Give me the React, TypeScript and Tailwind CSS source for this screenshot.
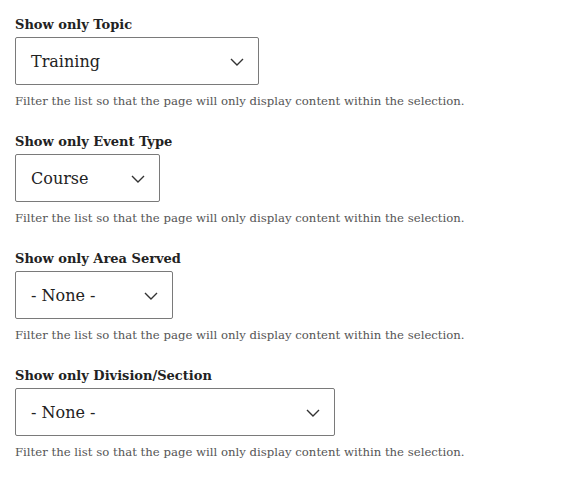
import React from "react";

const sections = [
  { label: "Show only Topic", value: "Training", w: "w-[244px]" },
  { label: "Show only Event Type", value: "Course", w: "w-[145px]" },
  { label: "Show only Area Served", value: "- None -", w: "w-[158px]" },
  { label: "Show only Division/Section", value: "- None -", w: "w-[320px]" },
];

function Chevron() {
  return (
    <svg width="14" height="8" viewBox="0 0 14 8" fill="none">
      <path d="M1 1l6 6 6-6" stroke="#333" strokeWidth="1.4" />
    </svg>
  );
}

export default function App() {
  return (
    <div className="bg-white w-[574px] h-[478px] pl-[15px] pt-[16px] text-[#222] font-['DejaVu_Serif',serif]">
      {sections.map((s) => (
        <div key={s.label} className="mb-[24px]">
          <div className="text-[13px] font-bold leading-[18px] mb-[3px]">{s.label}</div>
          <div className={`${s.w} h-[48px] border border-[#7a7a7a] rounded-[2px] flex items-center justify-between pl-[15px] pr-[14px] pt-[1px]`}>
            <span className="text-[16px]">{s.value}</span>
            <Chevron />
          </div>
          <div className="text-[11.7px] text-[#555] mt-[8px] leading-[16px]">
            Filter the list so that the page will only display content within the selection.
          </div>
        </div>
      ))}
    </div>
  );
}
